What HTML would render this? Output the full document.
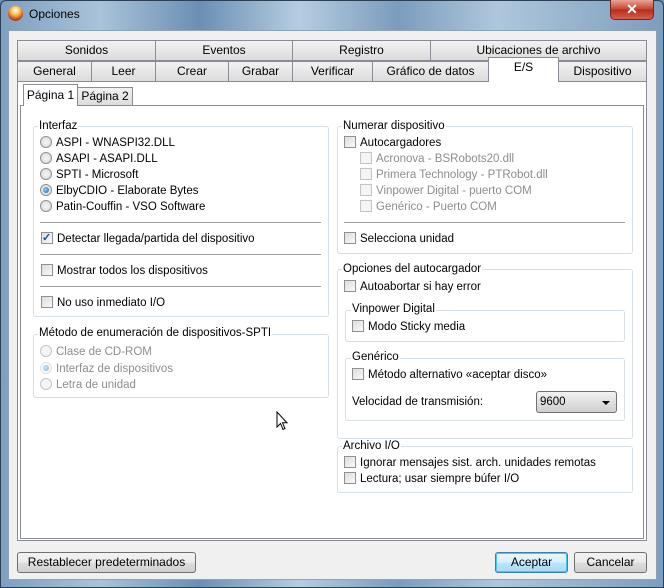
<!DOCTYPE html>
<html><head><meta charset="utf-8"><style>
*{margin:0;padding:0;box-sizing:border-box}
body{width:664px;height:588px;overflow:hidden;font-family:"Liberation Sans",sans-serif;font-size:11.5px;color:#000;position:relative;background:#6d8fb0}
.a{position:absolute}
.frame{left:0;top:0;width:664px;height:588px;background:linear-gradient(90deg,#7f9fbf 0%,#a9c3d9 15%,#6b8fb3 30%,#b5cde0 45%,#7c9cbd 60%,#aec7dc 75%,#7d9dbd 100%);border:1px solid #2b3f55;border-radius:6px 6px 0 0}
.client{left:8px;top:30px;width:649px;height:550px;background:#f0f0f0;border:1px solid #8ca3bb}
.tab{position:absolute;height:21px;background:linear-gradient(#f2f2f2,#dcdcdc);border:1px solid #898c95;text-align:center;line-height:19px;font-size:12px}
.panel{left:17px;top:81px;width:630px;height:460px;background:#fff;border:1px solid #898c95}
.inner{left:20px;top:105px;width:624px;height:434px;border:1px solid #898c95;background:#fff}
.gb{position:absolute;border:1px solid #d5dfe5;border-radius:3px}
.gl{position:absolute;background:#fff;padding:0 1px;line-height:13px;white-space:nowrap}
.sep{position:absolute;height:2px;border-top:1px solid #a0a0a0;border-bottom:1px solid #fff}
.r{position:absolute;white-space:nowrap;line-height:16px}
.rb{display:inline-block;width:12px;height:12px;border-radius:50%;border:1px solid #8e8f8f;background:radial-gradient(#f4f4f4,#d8d8d8);vertical-align:-2px;margin-right:4px;position:relative}
.rb.on::after{content:"";position:absolute;left:2px;top:2px;width:6px;height:6px;border-radius:50%;background:radial-gradient(circle at 40% 40%,#8cd0ff,#1a5fa8)}
.cb{display:inline-block;width:12px;height:12px;border:1px solid #8e8f8f;background:linear-gradient(135deg,#dcdcdc,#fafafa);vertical-align:-2px;margin-right:4px;position:relative}
.dis{color:#8d8d8d}
.dis .cb,.dis .rb{border-color:#c5c5c5;background:#f4f4f4}
.btn{position:absolute;height:21px;border:1px solid #707070;border-radius:3px;background:linear-gradient(#f2f2f2 0%,#ebebeb 50%,#dddddd 51%,#cfcfcf 100%);text-align:center;line-height:19px;font-size:12px}
</style></head><body>
<div class="a frame"></div>
<div class="a" style="left:8px;top:6px;width:15px;height:15px;border-radius:50%;background:radial-gradient(circle at 50% 30%,#fff 0,#f3c04a 35%,#c4401c 70%,#6b2a10 100%)"></div>
<div class="a" style="left:29px;top:7px;font-size:12px;color:#000">Opciones</div>
<div class="a" style="left:610px;top:0;width:44px;height:20px;border:1px solid #6e2a22;border-top:none;border-radius:0 0 5px 5px;background:linear-gradient(#e8a497,#c8412f 50%,#b52c1a 51%,#d4604a);color:#fff;text-align:center;font-weight:bold;font-size:14px;line-height:18px">✕</div>
<div class="a client"></div>

<div class="tab" style="left:17px;top:40px;width:139px">Sonidos</div>
<div class="tab" style="left:155px;top:40px;width:138px">Eventos</div>
<div class="tab" style="left:292px;top:40px;width:139px">Registro</div>
<div class="tab" style="left:430px;top:40px;width:217px">Ubicaciones de archivo</div>
<div class="tab" style="left:17px;top:61px;width:75px">General</div>
<div class="tab" style="left:91px;top:61px;width:65px">Leer</div>
<div class="tab" style="left:155px;top:61px;width:74px">Crear</div>
<div class="tab" style="left:228px;top:61px;width:65px">Grabar</div>
<div class="tab" style="left:292px;top:61px;width:81px">Verificar</div>
<div class="tab" style="left:372px;top:61px;width:117px">Gráfico de datos</div>
<div class="tab" style="left:558px;top:61px;width:89px">Dispositivo</div>
<div class="a panel"></div>
<div class="tab" style="left:488px;top:57px;width:71px;height:25px;background:#fff;border-bottom:none;line-height:19px">E/S</div>

<div class="a inner"></div>
<div class="tab" style="left:77px;top:87px;width:56px;height:19px;line-height:17px">Página 2</div>
<div class="tab" style="left:23px;top:84px;width:55px;height:22px;background:#fff;border-bottom:none;line-height:20px">Página 1</div>

<div class="gb" style="left:33px;top:126px;width:296px;height:191px"></div>
<div class="gl" style="left:38px;top:120px">Interfaz</div>
<div class="r" style="left:40px;top:135px"><span class="rb"></span>ASPI - WNASPI32.DLL</div>
<div class="r" style="left:40px;top:151px"><span class="rb"></span>ASAPI - ASAPI.DLL</div>
<div class="r" style="left:40px;top:167px"><span class="rb"></span>SPTI - Microsoft</div>
<div class="r" style="left:40px;top:183px"><span class="rb on"></span>ElbyCDIO - Elaborate Bytes</div>
<div class="r" style="left:40px;top:199px"><span class="rb"></span>Patin-Couffin - VSO Software</div>
<div class="sep" style="left:40px;top:222px;width:281px"></div>
<div class="r" style="left:41px;top:231px"><span class="cb"><span style="position:absolute;left:0;top:-3px;color:#1c4f9c;font-size:11px;font-weight:bold">✓</span></span>Detectar llegada/partida del dispositivo</div>
<div class="sep" style="left:40px;top:254px;width:281px"></div>
<div class="r" style="left:41px;top:263px"><span class="cb"></span>Mostrar todos los dispositivos</div>
<div class="sep" style="left:40px;top:286px;width:281px"></div>
<div class="r" style="left:41px;top:295px"><span class="cb"></span>No uso inmediato I/O</div>

<div class="gb" style="left:33px;top:334px;width:296px;height:64px"></div>
<div class="gl" style="left:38px;top:327px">Método de enumeración de dispositivos-SPTI</div>
<div class="r dis" style="left:40px;top:344px"><span class="rb"></span>Clase de CD-ROM</div>
<div class="r dis" style="left:40px;top:361px"><span class="rb on" style="opacity:.5"></span>Interfaz de dispositivos</div>
<div class="r dis" style="left:40px;top:377px"><span class="rb"></span>Letra de unidad</div>

<svg class="a" style="left:276px;top:411px" width="13" height="20" viewBox="0 0 13 20"><path d="M1 1 L1 16 L4.5 12.5 L7 18.5 L9 17.5 L6.5 11.8 L11 11.8 Z" fill="#fff" stroke="#000" stroke-width="1"/></svg>

<div class="gb" style="left:337px;top:126px;width:296px;height:128px"></div>
<div class="gl" style="left:342px;top:120px">Numerar dispositivo</div>
<div class="r" style="left:344px;top:135px"><span class="cb"></span>Autocargadores</div>
<div class="r dis" style="left:360px;top:151px"><span class="cb"></span>Acronova - BSRobots20.dll</div>
<div class="r dis" style="left:360px;top:167px"><span class="cb"></span>Primera Technology - PTRobot.dll</div>
<div class="r dis" style="left:360px;top:183px"><span class="cb"></span>Vinpower Digital - puerto COM</div>
<div class="r dis" style="left:360px;top:199px"><span class="cb"></span>Genérico - Puerto COM</div>
<div class="sep" style="left:344px;top:222px;width:281px"></div>
<div class="r" style="left:344px;top:231px"><span class="cb"></span>Selecciona unidad</div>

<div class="gb" style="left:337px;top:269px;width:296px;height:170px"></div>
<div class="gl" style="left:342px;top:263px">Opciones del autocargador</div>
<div class="r" style="left:344px;top:279px"><span class="cb"></span>Autoabortar si hay error</div>
<div class="gb" style="left:345px;top:310px;width:280px;height:32px"></div>
<div class="gl" style="left:351px;top:303px">Vinpower Digital</div>
<div class="r" style="left:352px;top:319px"><span class="cb"></span>Modo Sticky media</div>
<div class="gb" style="left:345px;top:358px;width:280px;height:63px"></div>
<div class="gl" style="left:351px;top:351px">Genérico</div>
<div class="r" style="left:352px;top:367px"><span class="cb"></span>Método alternativo «aceptar disco»</div>
<div class="r" style="left:352px;top:394px">Velocidad de transmisión:</div>
<div class="a" style="left:536px;top:391px;width:81px;height:22px;border:1px solid #707070;border-radius:3px;background:linear-gradient(#f2f2f2,#e0e0e0 50%,#cfcfcf);line-height:20px;padding-left:3px">9600<span style="position:absolute;right:6px;top:9px;border:4px solid transparent;border-top:4px solid #000;border-bottom:none;width:0;height:0"></span></div>

<div class="gb" style="left:337px;top:446px;width:296px;height:47px"></div>
<div class="gl" style="left:342px;top:440px">Archivo I/O</div>
<div class="r" style="left:344px;top:455px"><span class="cb"></span>Ignorar mensajes sist. arch. unidades remotas</div>
<div class="r" style="left:344px;top:471px"><span class="cb"></span>Lectura; usar siempre búfer I/O</div>

<div class="btn" style="left:17px;top:552px;width:179px">Restablecer predeterminados</div>
<div class="btn" style="left:495px;top:552px;width:73px;border-color:#3c7fb1;background:linear-gradient(#eaf6fd 0%,#d9f0fc 50%,#bee6fd 51%,#a7d9f5 100%);box-shadow:inset 0 0 0 1px #48c6f5">Aceptar</div>
<div class="btn" style="left:574px;top:552px;width:73px">Cancelar</div>
</body></html>
